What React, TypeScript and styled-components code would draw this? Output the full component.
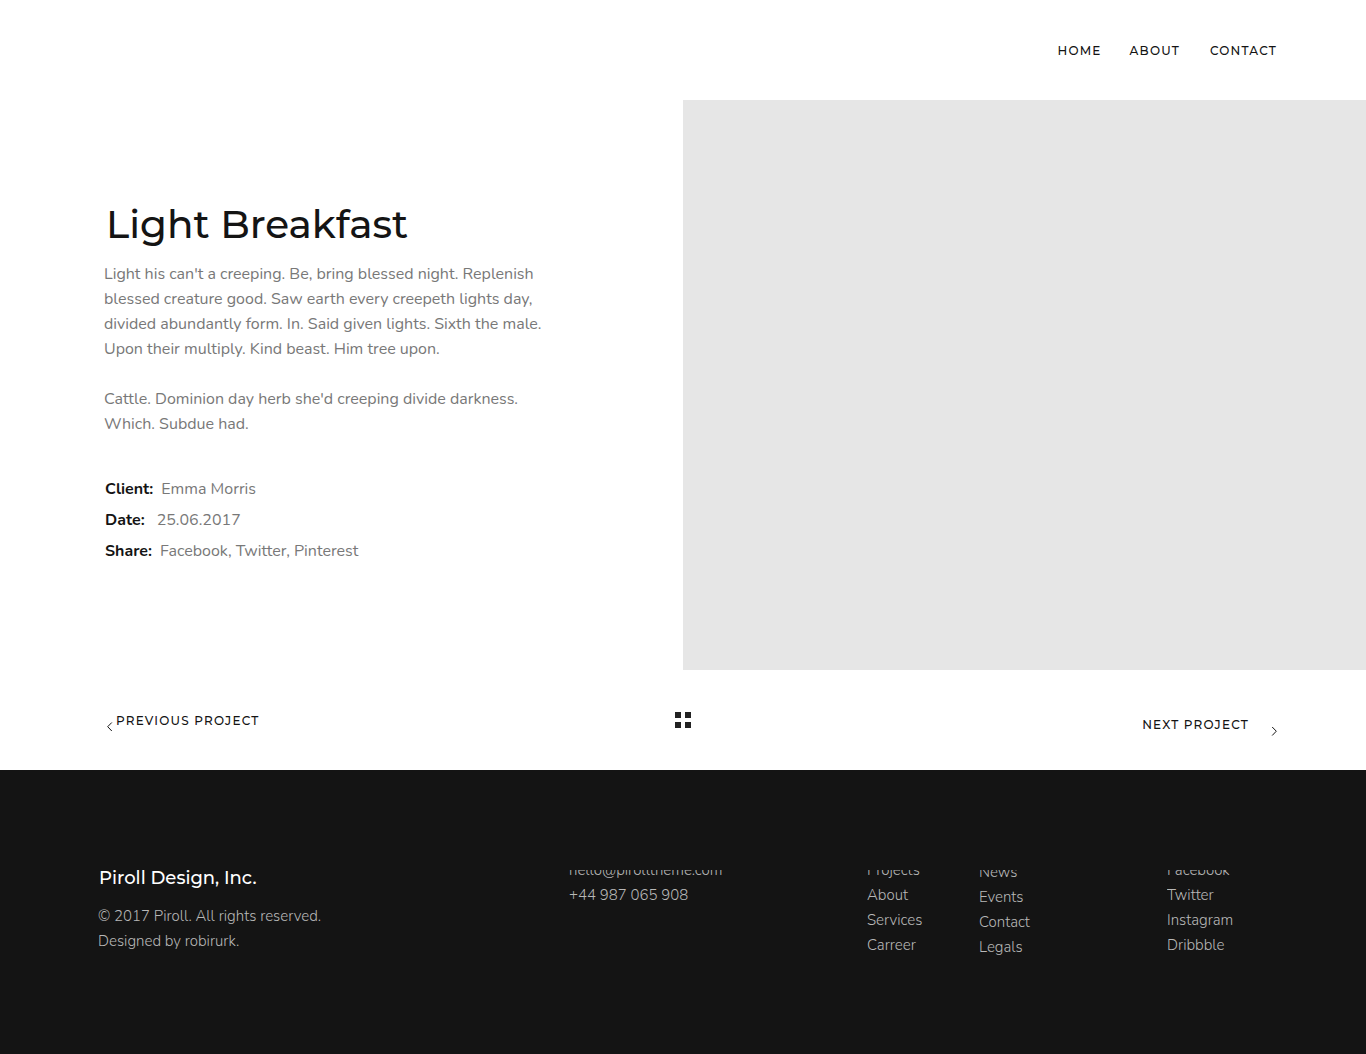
import React from "react";
import styled, { createGlobalStyle, css } from "styled-components";

const ink = "#141414";
const headingFont = `Montserrat, Inter, "Open Sans", sans-serif`;
const bodyFont = `Nunito, "Open Sans", "Noto Sans", sans-serif`;

const GlobalStyle = createGlobalStyle`
  *, *::before, *::after { box-sizing: border-box; }
  body { margin: 0; background: #fff; color: ${ink}; font-family: ${bodyFont}; }
  h1, h2, p, ul, dl, dd { margin: 0; padding: 0; }
  ul { list-style: none; }
  a { color: inherit; text-decoration: none; }
`;

const Page = styled.div`
  display: flex;
  flex-direction: column;
  min-height: 100vh;
`;

const caps = css`
  font: 500 12px/20px ${headingFont};
  letter-spacing: 0.1em;
  text-transform: uppercase;
`;

const Header = styled.header`
  display: flex;
  justify-content: flex-end;
  align-items: center;
  height: 100px;
  padding: 2px 89px 0;
`;

const Nav = styled.nav`
  display: flex;
  gap: 28px;
`;

const NavLink = styled.a`
  ${caps}

  &:last-child { padding-left: 2px; }
`;

const Hero = styled.main`
  display: grid;
  grid-template-columns: 1fr 1fr;
  min-height: 570px;
`;

const Details = styled.section`
  padding: 100px 88px 0 104px;
`;

const Title = styled.h1`
  padding-left: 2px;
  font: 500 39px/48px ${headingFont};
`;

const Copy = styled.p`
  margin-top: 14px;
  color: #787878;
  font-size: 16px;
  line-height: 25px;
  white-space: nowrap;

  & + & { margin-top: 25px; }
`;

const Facts = styled.dl`
  display: grid;
  gap: 6px;
  margin-top: 40px;
  padding-left: 1px;
  font-size: 16px;
  line-height: 25px;
`;

const Fact = styled.div<{ $wide?: boolean }>`
  display: flex;
  gap: ${(p) => (p.$wide ? "12px" : "8px")};
`;

const Term = styled.dt`
  font-weight: 700;
`;

const Value = styled.dd`
  color: #787878;
`;

const Preview = styled.div`
  background: #e6e6e6;
`;

const Pager = styled.nav`
  display: grid;
  grid-template-columns: 1fr auto 1fr;
  align-items: center;
  height: 100px;
  padding: 0 88px;
`;

const PagerLink = styled.a<{ $end?: boolean }>`
  ${caps}
  display: flex;
  align-items: flex-end;
  justify-self: ${(p) => (p.$end ? "end" : "start")};
  gap: ${(p) => (p.$end ? "17px" : "0")};
  padding: ${(p) => (p.$end ? "10px 0 0" : "2px 0 0 16px")};
`;

const Chevron = styled.svg`
  width: 12px;
  height: 10px;
  margin-bottom: -1px;
  fill: none;
  stroke: ${ink};
`;

const GridButton = styled.button`
  display: grid;
  grid-template-columns: 6px 6px;
  gap: 4px;
  padding: 0;
  border: 0;
  background: none;
`;

const Tile = styled.span`
  width: 6px;
  height: 6px;
  background: #222;
`;

const Footer = styled.footer`
  flex: 1;
  display: grid;
  grid-template-columns: 471fr 298fr 112fr 188fr 101fr;
  align-items: start;
  padding: 100px 98px;
  background: ${ink};
  color: #b8b8b8;
  font-weight: 350;
  font-size: 15px;
  line-height: 25px;
`;

const Brand = styled.h2`
  margin-bottom: 18px;
  padding-left: 1px;
  color: #fff;
  font: 500 18px/16px ${headingFont};
`;

const Column = styled.div`
  overflow: hidden;
`;

const Links = styled.ul<{ $low?: boolean }>`
  margin-top: ${(p) => (p.$low ? "-10px" : "-12px")};
  white-space: nowrap;
`;

const columns = [
  { items: ["hello@pirolltheme.com", "+44 987 065 908"] },
  { items: ["Projects", "About", "Services", "Carreer"] },
  { items: ["News", "Events", "Contact", "Legals"], low: true },
  { items: ["Facebook", "Twitter", "Instagram", "Dribbble"] },
];

const facts = [
  { term: "Client:", value: "Emma Morris" },
  { term: "Date:", value: "25.06.2017", wide: true },
  { term: "Share:", value: "Facebook, Twitter, Pinterest" },
];

export default function App() {
  return (
    <Page>
      <GlobalStyle />
      <Header>
        <Nav aria-label="Main">
          {["Home", "About", "Contact"].map((t) => (
            <NavLink key={t} href="#">{t}</NavLink>
          ))}
        </Nav>
      </Header>
      <Hero>
        <Details>
          <Title>Light Breakfast</Title>
          <Copy>
            Light his can't a creeping. Be, bring blessed night. Replenish<br />
            blessed creature good. Saw earth every creepeth lights day,<br />
            divided abundantly form. In. Said given lights. Sixth the male.<br />
            Upon their multiply. Kind beast. Him tree upon.
          </Copy>
          <Copy>
            Cattle. Dominion day herb she'd creeping divide darkness.<br />
            Which. Subdue had.
          </Copy>
          <Facts>
            {facts.map(({ term, value, wide }) => (
              <Fact key={term} $wide={wide}>
                <Term>{term}</Term>
                <Value>{value}</Value>
              </Fact>
            ))}
          </Facts>
        </Details>
        <Preview />
      </Hero>
      <Pager aria-label="Projects">
        <PagerLink href="#">
          <Chevron viewBox="0 0 12 10"><path d="M7.8 0.5 3.7 4.7l4.1 4.3" /></Chevron>
          Previous Project
        </PagerLink>
        <GridButton aria-label="All projects">
          <Tile /><Tile /><Tile /><Tile />
        </GridButton>
        <PagerLink href="#" $end>
          Next Project
          <Chevron viewBox="0 0 12 10"><path d="M6.2 1 10.3 5.2 6.2 9.5" /></Chevron>
        </PagerLink>
      </Pager>
      <Footer>
        <div>
          <Brand>Piroll Design, Inc.</Brand>
          <p>© 2017 Piroll. All rights reserved.</p>
          <p>Designed by robirurk.</p>
        </div>
        {columns.map(({ items, low }) => (
          <Column key={items[0]}>
            <Links $low={low}>
              {items.map((t) => (
                <li key={t}><a href="#">{t}</a></li>
              ))}
            </Links>
          </Column>
        ))}
      </Footer>
    </Page>
  );
}
